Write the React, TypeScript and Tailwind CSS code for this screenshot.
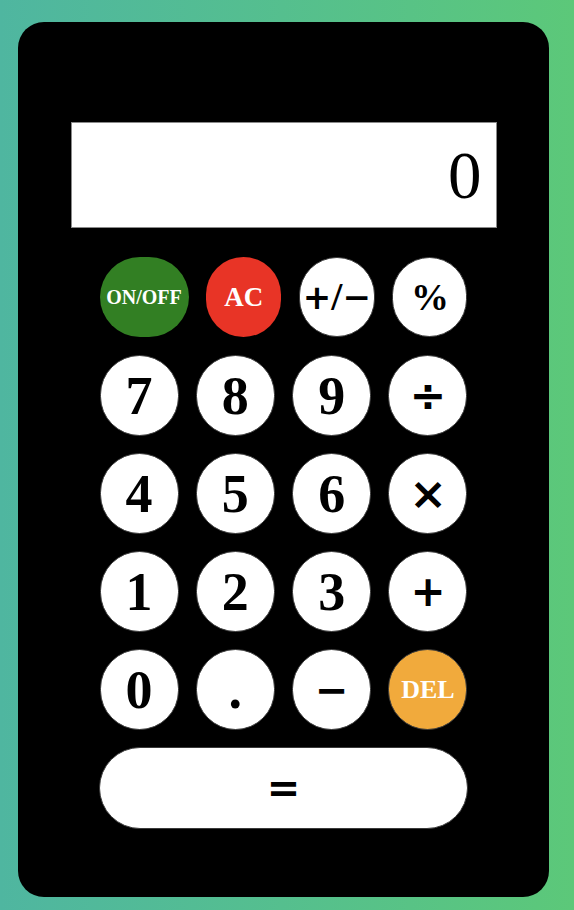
const serif = "font-['Liberation_Serif','Times_New_Roman',serif]";
const sans = "font-['DejaVu_Sans','Liberation_Sans',sans-serif]";

type Key = { label: string; kind?: "op" | "del"; size?: string };

const keys: Key[] = [
  { label: "7" },
  { label: "8" },
  { label: "9" },
  { label: "÷", kind: "op", size: "text-[44px]" },
  { label: "4" },
  { label: "5" },
  { label: "6" },
  { label: "×", kind: "op", size: "text-[45px]" },
  { label: "1" },
  { label: "2" },
  { label: "3" },
  { label: "+", kind: "op", size: "text-[42px]" },
  { label: "0" },
  { label: "." },
  { label: "−", kind: "op", size: "text-[40px]" },
  { label: "DEL", kind: "del" },
];

function KeyButton({ k }: { k: Key }) {
  if (k.kind === "del") {
    return (
      <button className="h-[81px] w-[79px] rounded-full bg-[#f1aa3c] border border-[#3a3a3a] flex items-center justify-center text-white font-bold text-[26px] leading-none">
        DEL
      </button>
    );
  }
  if (k.kind === "op") {
    return (
      <button className={`h-[81px] w-[79px] rounded-full bg-white border border-[#3a3a3a] flex items-center justify-center text-black font-bold leading-none ${sans} ${k.size}`}>
        {k.label}
      </button>
    );
  }
  return (
    <button className="h-[81px] w-[79px] rounded-full bg-white border border-[#3a3a3a] flex items-center justify-center text-black font-bold text-[54px] leading-none">
      {k.label}
    </button>
  );
}

export default function App() {
  return (
    <div className={`w-full h-[910px] bg-linear-to-r from-[#4fb6a0] to-[#5cc879] pt-[22px] pl-[18px] ${serif}`}>
      <div className="w-[531px] h-[875px] bg-black rounded-[26px] flex flex-col items-center pt-[100px]">
        <div className="w-[426px] h-[106px] bg-white border border-[#8a8a8a] flex items-center justify-end pr-[14px]">
          <span className="text-[67px] leading-none text-black">0</span>
        </div>

        <div className="mt-[29px] w-[368px] h-[80px] flex justify-between">
          <button className="h-[80px] w-[89px] rounded-full bg-[#327f23] flex items-center justify-center text-white font-bold text-[20px] leading-none">
            ON/OFF
          </button>
          <button className="h-[80px] w-[75px] rounded-full bg-[#e83426] flex items-center justify-center text-white font-bold text-[27px] leading-none">
            AC
          </button>
          <button className="h-[80px] w-[76px] rounded-full bg-white border border-[#3a3a3a] flex items-center justify-center text-black font-bold leading-none">
            <span className={`${sans} text-[34px]`}>+</span>
            <span className="text-[40px]">/</span>
            <span className={`${sans} text-[34px]`}>−</span>
          </button>
          <button className="h-[80px] w-[75px] rounded-full bg-white border border-[#3a3a3a] flex items-center justify-center text-black font-bold text-[38px] leading-none">
            %
          </button>
        </div>

        <div className="mt-[18px] w-[368px] grid grid-cols-[repeat(4,79px)] justify-between gap-y-[17px]">
          {keys.map((k) => (
            <KeyButton key={k.label} k={k} />
          ))}
        </div>

        <button className={`mt-[17px] w-[369px] h-[82px] rounded-full bg-white border border-[#3a3a3a] flex items-center justify-center text-black font-bold text-[40px] leading-none ${sans}`}>
          =
        </button>
      </div>
    </div>
  );
}
